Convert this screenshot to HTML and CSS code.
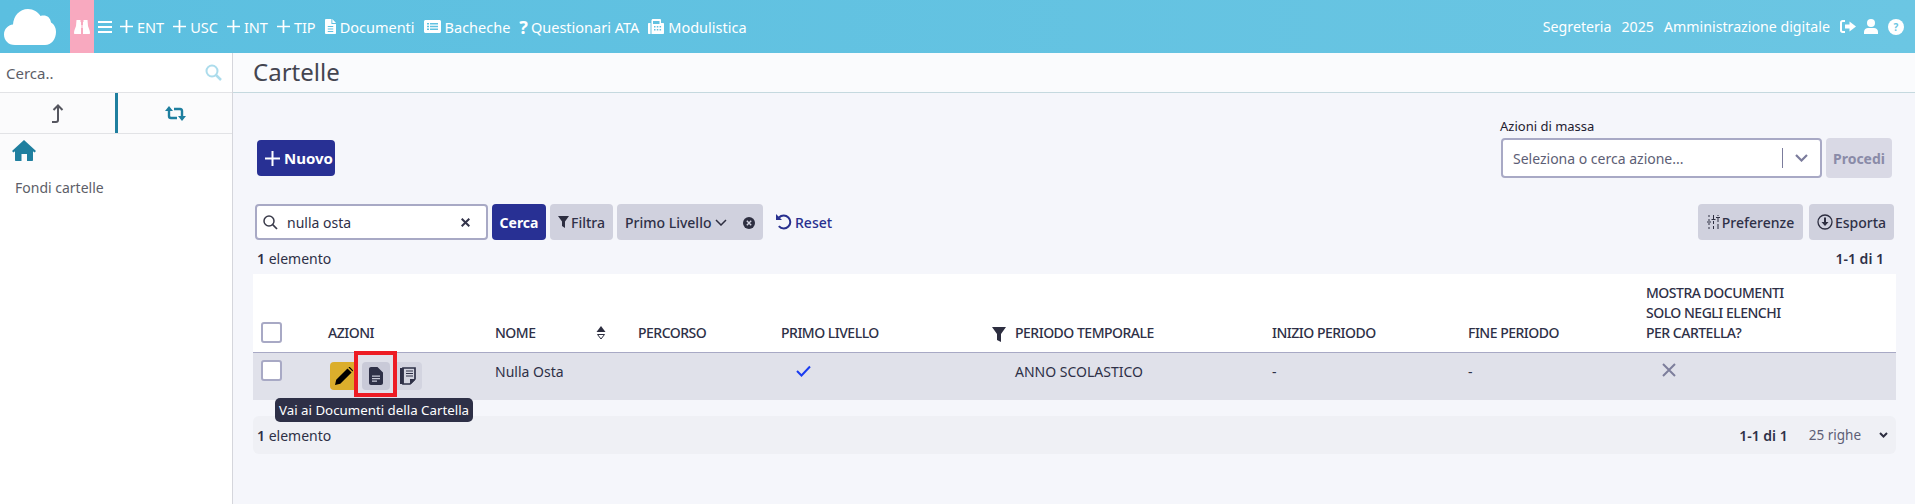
FILE: index.html
```html
<!DOCTYPE html>
<html lang="it">
  <head>
    <meta charset="UTF-8" />
    <title>Cartelle</title>
    <link rel="stylesheet" href="styles.css">
  </head>
  <body>
    <header class="topbar">
      <a class="logo">
        <svg width="52" height="36" viewBox="0 0 52 36"><path fill="#fff" d="M11 36C4 36 0 31 0 25.500 0 20 4 16 9 15.500 9.500 7 15.500 0 24 0c5.500 0 10 3 12.500 7 1-.5 2-.6 3-.6 4 0 7 2.600 7.500 7.100 3 1.500 5 5 5 9.500 0 7-4.500 13-11 13z"/></svg>
      </a>
      <span class="binoculars">
        <svg width="16" height="14" viewBox="0 0 16 14"><path fill="#fff" d="M2.500 0h4v2H7v12H1c-.6 0-1-.4-1-1 0-3 1.500-5 2-7zM9.500 0h4L14 6c.5 2 2 4 2 7 0 .6-.4 1-1 1H9V2h.5zM7.500 5h1v3h-1z"/></svg>
      </span>
      <nav class="nav">
        <a class="nav-burger"><svg width="14" height="12" viewBox="0 0 14 12"><path fill="#fff" d="M0 0h14v2H0zM0 5h14v2H0zM0 10h14v2H0z"/></svg></a>
        <a class="nav-item"><svg width="13" height="13" viewBox="0 0 15 15"><path fill="#fff" d="M6.500 0h2v6.500H15v2H8.500V15h-2V8.500H0v-2h6.500z"/></svg>ENT</a>
        <a class="nav-item"><svg width="13" height="13" viewBox="0 0 15 15"><path fill="#fff" d="M6.500 0h2v6.500H15v2H8.500V15h-2V8.500H0v-2h6.500z"/></svg>USC</a>
        <a class="nav-item"><svg width="13" height="13" viewBox="0 0 15 15"><path fill="#fff" d="M6.500 0h2v6.500H15v2H8.500V15h-2V8.500H0v-2h6.500z"/></svg>INT</a>
        <a class="nav-item"><svg width="13" height="13" viewBox="0 0 15 15"><path fill="#fff" d="M6.500 0h2v6.500H15v2H8.500V15h-2V8.500H0v-2h6.500z"/></svg>TIP</a>
        <a class="nav-item"><svg width="11" height="15" viewBox="0 0 12 15" preserveAspectRatio="none"><path fill="#fff" fill-rule="evenodd" d="M1 0h6v5h5v9c0 .6-.4 1-1 1H1c-.6 0-1-.4-1-1V1c0-.6.4-1 1-1zM8 0l4 4H8zM3 7v1h6V7zM3 9.500v1h6v-1zM3 12v1h6v-1z"/></svg>Documenti</a>
        <a class="nav-item"><svg width="17" height="13" viewBox="0 0 17 13"><path fill="#fff" fill-rule="evenodd" d="M1.500 0h14c.8 0 1.500.7 1.500 1.500v10c0 .8-.7 1.500-1.500 1.500h-14C.7 13 0 12.300 0 11.500v-10C0 .7.700 0 1.500 0zM3 3v1.500h2V3zM6 3v1.500h8V3zM3 5.800v1.500h2V5.800zM6 5.800v1.500h8V5.800zM3 8.600v1.500h2V8.600zM6 8.600v1.500h8V8.600z"/></svg>Bacheche</a>
        <a class="nav-item nav-quest"><span class="qmark">?</span>Questionari ATA</a>
        <a class="nav-item"><svg width="16" height="15" viewBox="0 0 16 15"><path fill="#fff" fill-rule="evenodd" d="M0 5c0-.6.400-1 1-1h1.500v11H1c-.6 0-1-.4-1-1zM3.500 1.500C3.500.700 4.200 0 5 0h7c.8 0 1 .7 1 1.500V4h2c.6 0 1 .4 1 1v9c0 .6-.4 1-1 1H3.500zM5 2v3h6.500V2zM6 7v1.500h1.500V7zM8.800 7v1.500h1.500V7zM11.600 7v1.500h1.500V7zM6 10v1.500h1.500V10zM8.800 10v1.500h1.500V10zM11.600 10v1.500h1.500V10z"/></svg>Modulistica</a>
      </nav>
      <div class="user-info">
        <span>Segreteria</span>
        <span>2025</span>
        <span>Amministrazione digitale</span>
        <svg class="user-exit" width="16" height="13" viewBox="0 0 16 13"><path fill="#fff" d="M5 0v2H3C2.400 2 2 2.400 2 3v7c0 .6.400 1 1 1h2v2H2.500C1.100 13 0 11.900 0 10.500v-8C0 1.100 1.100 0 2.500 0zM9.500 1.500L16 6.500l-6.500 5V8.500H5v-4h4.500z"/></svg>
        <svg class="user-icon" width="14" height="15" viewBox="0 0 14 15"><circle fill="#fff" cx="7" cy="4" r="4"/><path fill="#fff" d="M0 15v-2c0-2.500 2-4 4-4h6c2 0 4 1.500 4 4v2z"/></svg>
        <span class="help">?</span>
      </div>
    </header>

    <div class="page">
      <aside class="sidebar">
        <div class="side-search">
          <span>Cerca..</span>
          <svg width="17" height="17" viewBox="0 0 17 17"><circle cx="7" cy="7" r="5.500" fill="none" stroke="#acdcec" stroke-width="2"/><path d="M11 11l5 5" stroke="#acdcec" stroke-width="2.500"/></svg>
        </div>
        <div class="side-tabs">
          <div class="side-tab side-tab-active">
            <svg width="14" height="19" viewBox="0 0 14 19"><path fill="none" stroke="#55565f" stroke-width="2" d="M1 18h4c1 0 2-.5 2-2V2"/><path fill="none" stroke="#55565f" stroke-width="2" d="M2.500 6L7 1.500 11.500 6"/></svg>
          </div>
          <div class="side-tab">
            <svg width="21" height="15" viewBox="0 0 21 15"><g fill="none" stroke="#1f7f9f" stroke-width="2.400"><path d="M4 3v7c0 1 .5 2 2 2h6"/><path d="M17 12V5c0-1-.5-2-2-2H9"/></g><path fill="#1f7f9f" d="M0 5l4-5 4 5zM13 10l4 5 4-5z"/></svg>
          </div>
        </div>
        <div class="side-home">
          <svg width="24" height="21" viewBox="0 0 24 21"><path fill="#1f7f9f" d="M12 0l12 11-1.500 1.500-1.500-1.300V20c0 .6-.4 1-1 1h-5v-7H9.500v7H4c-.6 0-1-.4-1-1v-8.800l-1.500 1.300L0 11z"/></svg>
        </div>
        <div class="side-link">Fondi cartelle</div>
      </aside>

      <main class="content">
        <div class="page-title"><h1>Cartelle</h1></div>
        <div class="body-wrap">
          <div class="actions-row">
            <button class="btn btn-primary btn-new">
              <svg width="15" height="15" viewBox="0 0 15 15"><path fill="#fff" d="M6.500 0h2v6.500H15v2H8.500V15h-2V8.500H0v-2h6.500z"/></svg>Nuovo
            </button>
            <div class="mass">
              <label>Azioni di massa</label>
              <div class="mass-row">
                <div class="select">
                  <span>Seleziona o cerca azione...</span>
                  <i class="select-sep"></i>
                  <svg width="13" height="8" viewBox="0 0 13 8"><path fill="none" stroke="#7b7c9c" stroke-width="2.200" d="M1 1l5.500 5.500L12 1"/></svg>
                </div>
                <button class="btn btn-off">Procedi</button>
              </div>
            </div>
          </div>

          <div class="toolbar">
            <div class="search-box">
              <svg width="15" height="15" viewBox="0 0 15 15"><circle cx="6" cy="6" r="5" fill="none" stroke="#3a3b4a" stroke-width="1.500"/><path d="M9.700 9.700L14 14" stroke="#3a3b4a" stroke-width="1.700"/></svg>
              <span class="search-value">nulla osta</span>
              <svg width="9" height="9" viewBox="0 0 9 9"><path stroke="#33344a" stroke-width="2" d="M.7.700l7.600 7.600M8.300.700L.7 8.300"/></svg>
            </div>
            <button class="btn btn-primary btn-search">Cerca</button>
            <button class="btn btn-grey btn-filter">
              <svg width="11" height="12" viewBox="0 0 11 12"><path fill="#2d2e40" d="M0 0h11L7 5.500V12L4 10V5.500z"/></svg>Filtra
            </button>
            <div class="btn btn-grey chip">
              <span>Primo Livello</span>
              <svg class="chip-arrow" width="12" height="7" viewBox="0 0 12 7"><path fill="none" stroke="#2d2e40" stroke-width="1.500" d="M1 1l5 5 5-5"/></svg>
              <svg class="chip-close" width="12" height="12" viewBox="0 0 12 12"><circle cx="6" cy="6" r="6" fill="#2d2e40"/><path stroke="#d0d1de" stroke-width="1.400" d="M3.800 3.800l4.400 4.400M8.200 3.800L3.800 8.200"/></svg>
            </div>
            <a class="reset">
              <svg width="17" height="16" viewBox="0 0 17 16"><path fill="none" stroke="#28308f" stroke-width="2" d="M4 3.500C5.200 2.200 6.800 1.500 8.800 1.500c3.500 0 6.500 3 6.500 6.500s-3 6.500-6.500 6.500c-2 0-3.700-.8-5-2.300"/><path fill="#28308f" d="M1 0l6 6H1z"/></svg>Reset
            </a>
            <div class="toolbar-right">
              <button class="btn btn-grey btn-pref">
                <svg width="13" height="14" viewBox="0 0 13 14"><path stroke="#2d2e40" stroke-width="1" fill="none" d="M2 0v2M2 4v2M2 8v2M2 12v2M6.500 0v4M6.500 6v3M6.500 11v3M11 0v1M11 3v4M11 9v5M0 7h4M4.500 4.500h4M9 2.500h4"/></svg>Preferenze
              </button>
              <button class="btn btn-grey btn-export">
                <svg width="16" height="16" viewBox="0 0 16 16"><circle cx="8" cy="8" r="7" fill="none" stroke="#2d2e40" stroke-width="1.300"/><path fill="#2d2e40" d="M7 3.500h2V8h2.500L8 12 4.500 8H7z"/></svg>Esporta
              </button>
            </div>
          </div>

          <div class="count-row">
            <span><b>1</b> elemento</span>
            <b class="count-range">1-1 di 1</b>
          </div>

          <table class="grid">
            <colgroup>
              <col class="col-check"><col class="col-actions"><col class="col-name"><col class="col-path"><col class="col-level"><col class="col-period"><col class="col-start"><col class="col-end"><col>
            </colgroup>
            <thead>
              <tr>
                <th><span class="checkbox"></span></th>
                <th>AZIONI</th>
                <th><div class="th-name">NOME<svg width="10" height="14" viewBox="0 0 10 14"><path fill="#2d2e40" d="M5 0l4.500 6h-9z"/><path fill="none" stroke="#2d2e40" d="M1.500 8.500h7L5 13z"/></svg></div></th>
                <th>PERCORSO</th>
                <th>PRIMO LIVELLO</th>
                <th class="th-filter"><svg width="14" height="15" viewBox="0 0 14 15"><path fill="#2d2e40" d="M0 0h14L9 7v8l-4-2V7z"/></svg>PERIODO TEMPORALE</th>
                <th>INIZIO PERIODO</th>
                <th>FINE PERIODO</th>
                <th>MOSTRA DOCUMENTI<br>SOLO NEGLI ELENCHI<br>PER CARTELLA?</th>
              </tr>
            </thead>
            <tbody>
              <tr>
                <td><span class="checkbox"></span></td>
                <td>
                  <div class="row-actions">
                    <span class="act act-edit"><svg width="18" height="18" viewBox="0 0 18 18"><path fill="#000" d="M0 18l1.200-5.300L12.500 1.400 16.600 5.500 5.300 16.800zM13.700.300c.4-.4 1-.4 1.400 0l2.600 2.600c.4.400.4 1 0 1.400L17.600 4.500 13.500.400z"/></svg></span>
                    <span class="act act-doc"><svg width="14" height="18" viewBox="0 0 14 18"><path fill="#2e3047" fill-rule="evenodd" d="M2 0h6.500L14 5.500V16c0 1.100-.9 2-2 2H2c-1.100 0-2-.9-2-2V2C0 .9.900 0 2 0zM3 8.500v1.200h8V8.500zM3 11v1.200h8V11zM3 13.500v1.200h5v-1.200z"/></svg></span>
                    <span class="act act-notes"><svg width="16" height="18" viewBox="0 0 16 18"><path fill="none" stroke="#2e3047" stroke-width="1.700" d="M3 1h12v11l-5 5H3z"/><path fill="#2e3047" d="M0 1h3.500v16H0zM10 17v-5h5v1l-4 4z"/><path stroke="#2e3047" d="M6 4h7M6 6.500h7M6 9h7"/></svg></span>
                  </div>
                </td>
                <td>Nulla Osta</td>
                <td></td>
                <td><svg class="check" width="15" height="12" viewBox="0 0 15 12"><path fill="none" stroke="#1a3cf0" stroke-width="2" d="M1 6l4.500 4.500L14 1.500"/></svg></td>
                <td>ANNO SCOLASTICO</td>
                <td>-</td>
                <td>-</td>
                <td><svg class="cross" width="14" height="14" viewBox="0 0 14 14"><path stroke="#7d7e9c" stroke-width="2" d="M1 1l12 12M13 1L1 13"/></svg></td>
              </tr>
            </tbody>
          </table>

          <div class="pager">
            <span><b>1</b> elemento</span>
            <b class="pager-range">1-1 di 1</b>
            <span class="pager-rows">25 righe</span>
            <svg width="9" height="6" viewBox="0 0 9 6"><path fill="none" stroke="#2d2e40" stroke-width="2" d="M1 1l3.500 3.500L8 1"/></svg>
          </div>

          <div class="highlight"></div>
          <div class="tooltip">Vai ai Documenti della Cartella</div>
        </div>
      </main>
    </div>
  </body>
</html>
```

FILE: styles.css
```css
html,
body {
  height: 100%;
  margin: 0;
}
body {
  font-family: "Noto Sans", "Open Sans", sans-serif;
  font-size: 14px;
  color: #2e3047;
  background: #f5f6fb;
  overflow: hidden;
}
button {
  font-family: inherit;
}

.topbar {
  display: flex;
  align-items: center;
  height: 53px;
  padding-left: 4px;
  padding-right: 11px;
  background: linear-gradient(90deg, #5bbfe0, #6bc6e3);
  color: #fff;
  font-size: 14.2px;
}
.logo {
  display: flex;
  width: 66px;
}
.binoculars {
  display: flex;
  align-items: center;
  justify-content: center;
  width: 24px;
  height: 53px;
  background: #f8a9bf;
}
.nav {
  display: flex;
  align-items: center;
  gap: 9px;
  margin-left: 4px;
  font-size: 14.5px;
}
.nav-burger {
  display: flex;
  margin-right: -1px;
}
.nav-item {
  display: flex;
  align-items: center;
  gap: 4px;
  white-space: nowrap;
}
.nav-quest {
  gap: 3px;
}
.qmark {
  font-weight: 700;
  font-size: 18px;
  line-height: 1;
}
.user-info {
  display: flex;
  align-items: center;
  gap: 10px;
  margin-left: auto;
}
.user-icon {
  margin-left: -2px;
}
.help {
  width: 16px;
  height: 16px;
  border-radius: 50%;
  background: #fff;
  color: #6bc6e3;
  font-size: 10px;
  font-weight: 700;
  line-height: 16px;
  text-align: center;
}

.page {
  display: flex;
  height: 451px;
}
.sidebar {
  flex: none;
  width: 232px;
  border-right: 1px solid #d5d6dc;
  background: #fff;
  color: #5d5e68;
}
.side-search {
  display: flex;
  align-items: center;
  justify-content: space-between;
  height: 39px;
  padding: 0 10px 0 6px;
  border-bottom: 1px solid #e2e3e6;
  font-size: 15px;
}
.side-tabs {
  display: flex;
  height: 40px;
  border-bottom: 1px solid #e2e3e6;
  background: #fbfbfc;
}
.side-tab {
  display: flex;
  align-items: center;
  justify-content: center;
  flex: 1;
}
.side-tab-active {
  flex: none;
  width: 115px;
  border-right: 3px solid #1f7f9f;
}
.side-home {
  height: 36px;
  padding: 6px 0 0 12px;
  box-sizing: border-box;
  background: #fbfbfc;
}
.side-link {
  padding: 8px 0 0 15px;
  font-size: 14px;
}

.content {
  flex: 1;
  min-width: 0;
}
.page-title {
  height: 39px;
  border-bottom: 1px solid #c5d9df;
  background: #fafbfd;
}
.page-title h1 {
  margin: 0;
  padding-left: 20px;
  font-size: 24px;
  font-weight: 400;
  line-height: 38px;
  color: #444550;
}
.body-wrap {
  position: relative;
  padding: 0 19px 0 20px;
}

.actions-row {
  display: flex;
  align-items: flex-end;
  justify-content: space-between;
  height: 85px;
  padding-left: 4px;
}
.btn {
  display: inline-flex;
  align-items: center;
  justify-content: center;
  border: none;
  border-radius: 4px;
  font-size: 14px;
  font-weight: 500;
  padding: 0;
}
.btn-primary {
  background: #283094;
  color: #fff;
  font-weight: 700;
}
.btn-grey {
  background: #d0d1de;
  color: #2e3047;
  height: 36px;
}
.btn-new {
  justify-content: flex-start;
  box-sizing: border-box;
  width: 78px;
  height: 36px;
  gap: 4px;
  margin-bottom: 2px;
  padding-left: 8px;
  font-size: 15px;
}
.btn-off {
  width: 66px;
  height: 40px;
  background: #d9d9e5;
  color: #8a8ba8;
  font-weight: 700;
}
.mass {
  margin-right: 4px;
}
.mass label {
  display: block;
  margin-bottom: 3px;
  margin-left: -1px;
  font-size: 13px;
  line-height: 18px;
  color: #1f2030;
}
.mass-row {
  display: flex;
  gap: 4px;
}
.select {
  display: flex;
  align-items: center;
  box-sizing: border-box;
  width: 321px;
  height: 40px;
  padding: 0 12px 0 10px;
  border: 2px solid #a8a9c5;
  border-radius: 4px;
  background: #fff;
  color: #5d5e75;
}
.select span {
  flex: 1;
}
.select-sep {
  width: 1px;
  height: 20px;
  margin-right: 12px;
  background: #7b7c9c;
}

.toolbar {
  display: flex;
  align-items: center;
  gap: 4px;
  margin-top: 26px;
  padding-left: 2px;
}
.search-box {
  display: flex;
  align-items: center;
  box-sizing: border-box;
  width: 233px;
  height: 36px;
  padding: 0 16px 0 6px;
  border: 2px solid #a8a9c5;
  border-radius: 4px;
  background: #fff;
}
.search-value {
  flex: 1;
  margin-left: 9px;
}
.btn-search {
  width: 54px;
  height: 36px;
}
.btn-filter {
  width: 63px;
  gap: 2px;
}
.chip {
  position: relative;
  width: 146px;
  justify-content: flex-start;
  padding-left: 8px;
  box-sizing: border-box;
}
.chip-arrow {
  margin-left: 4px;
}
.chip-close {
  position: absolute;
  right: 8px;
  top: 13px;
}
.reset {
  display: flex;
  align-items: center;
  gap: 3px;
  margin-left: 8px;
  color: #28308f;
  font-weight: 500;
}
.toolbar-right {
  display: flex;
  gap: 6px;
  margin-left: auto;
  margin-right: 2px;
}
.btn-pref {
  width: 105px;
  gap: 2px;
}
.btn-export {
  width: 85px;
  gap: 2px;
}

.count-row {
  display: flex;
  justify-content: space-between;
  height: 34px;
  padding: 10px 12px 0 4px;
  box-sizing: border-box;
  line-height: 18px;
}
.count-range {
  font-weight: 600;
}
b {
  font-weight: 600;
}

.grid {
  width: 100%;
  table-layout: fixed;
  border-collapse: collapse;
  background: #fff;
}
.col-check { width: 75px; }
.col-actions { width: 167px; }
.col-name { width: 143px; }
.col-path { width: 143px; }
.col-level { width: 234px; }
.col-period { width: 257px; }
.col-start { width: 196px; }
.col-end { width: 178px; }
.grid th {
  height: 78px;
  padding: 0 0 9px 0;
  box-sizing: border-box;
  border-bottom: 1px solid #a8a9c5;
  font-size: 14px;
  font-weight: 500;
  letter-spacing: -0.5px;
  line-height: 20px;
  text-align: left;
  vertical-align: bottom;
  color: #2e3047;
}
.grid th:first-child,
.grid td:first-child {
  padding-left: 8px;
}
.grid td {
  height: 48px;
  padding: 0 0 9px 0;
  box-sizing: border-box;
  background: #e0e1ea;
  line-height: 18px;
  vertical-align: middle;
}
.th-name {
  display: flex;
  align-items: center;
  justify-content: space-between;
  width: 111px;
}
.th-filter {
  position: relative;
}
.th-filter svg {
  position: absolute;
  left: -23px;
  bottom: 10px;
}
.checkbox {
  display: block;
  width: 17px;
  height: 17px;
  border: 2px solid #a8a9c5;
  border-radius: 3px;
  background: #fff;
}
.grid td .checkbox {
  margin-top: -2px;
}
.row-actions {
  display: flex;
  gap: 4px;
  margin-left: 2px;
  padding-top: 9px;
}
.act {
  display: flex;
  align-items: center;
  justify-content: center;
  width: 28px;
  height: 28px;
  border-radius: 4px;
}
.act-edit {
  background: #dbae2c;
}
.act-doc {
  background: #c9cad8;
}
.act-notes {
  background: #d3d4e0;
}
.check {
  margin-left: 15px;
}
.cross {
  margin-left: 16px;
}

.pager {
  display: flex;
  align-items: center;
  height: 38px;
  margin-top: 16px;
  padding: 0 8px 0 4px;
  border-radius: 6px;
  background: #eff0f5;
}
.pager-range {
  margin-left: auto;
}
.pager-rows {
  margin: 0 18px 0 21px;
  font-size: 13.5px;
  color: #5d5e75;
}

.highlight {
  position: absolute;
  left: 121px;
  top: 258px;
  width: 35px;
  height: 38px;
  border: 4px solid #ed1c24;
}
.tooltip {
  position: absolute;
  left: 42px;
  top: 305px;
  padding: 0 4px;
  height: 24px;
  border-radius: 5px;
  background: #2e3047;
  color: #fff;
  font-size: 13.3px;
  line-height: 24px;
  white-space: nowrap;
}
```
